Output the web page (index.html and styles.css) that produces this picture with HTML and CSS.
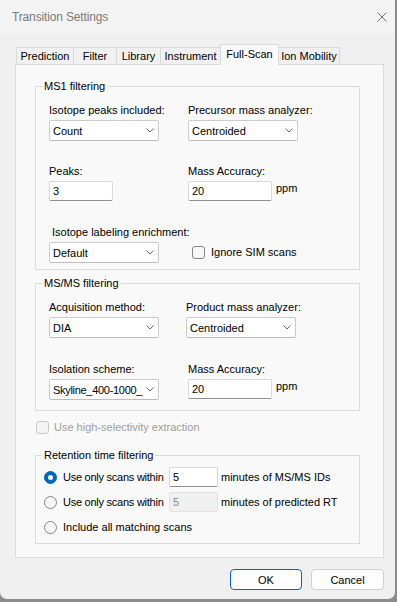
FILE: index.html
```html
<!DOCTYPE html>
<html lang="en">
<head>
  <meta charset="UTF-8" />
  <title>Transition Settings</title>
  <link rel="stylesheet" href="styles.css">
</head>
<body>
  <div class="window">
    <div class="titlebar">
      <span class="title">Transition Settings</span>
      <svg class="close-icon" width="10" height="10" viewBox="0 0 10 10">
        <path d="M0.5 0.5 L9.5 9.5 M9.5 0.5 L0.5 9.5" />
      </svg>
    </div>

    <div class="dialog">
      <div class="tabs">
        <div class="tab tab-prediction">Prediction</div>
        <div class="tab tab-filter">Filter</div>
        <div class="tab tab-library">Library</div>
        <div class="tab tab-instrument">Instrument</div>
        <div class="tab tab-fullscan active">Full-Scan</div>
        <div class="tab tab-ionmobility">Ion Mobility</div>
      </div>

      <div class="panel">
        <fieldset class="group group-ms1">
          <legend>MS1 filtering</legend>
          <div class="group-body">
            <div class="field">
              <label>Isotope peaks included:</label>
              <div class="combo">
                <span class="combo-text">Count</span>
                <svg class="chevron" width="8" height="5" viewBox="0 0 8 5"><polyline points="0.5,0.5 4,4 7.5,0.5" /></svg>
              </div>
            </div>
            <div class="field">
              <label>Precursor mass analyzer:</label>
              <div class="combo">
                <span class="combo-text">Centroided</span>
                <svg class="chevron" width="8" height="5" viewBox="0 0 8 5"><polyline points="0.5,0.5 4,4 7.5,0.5" /></svg>
              </div>
            </div>
            <div class="field">
              <label>Peaks:</label>
              <input class="textbox textbox-peaks" type="text" value="3">
            </div>
            <div class="field">
              <label>Mass Accuracy:</label>
              <div class="unit-row">
                <input class="textbox" type="text" value="20">
                <span class="unit">ppm</span>
              </div>
            </div>
            <div class="field">
              <label class="label-indent">Isotope labeling enrichment:</label>
              <div class="combo">
                <span class="combo-text">Default</span>
                <svg class="chevron" width="8" height="5" viewBox="0 0 8 5"><polyline points="0.5,0.5 4,4 7.5,0.5" /></svg>
              </div>
            </div>
            <div class="field field-check">
              <div class="check-row check-sim">
                <span class="checkbox"></span>
                <span>Ignore SIM scans</span>
              </div>
            </div>
          </div>
        </fieldset>

        <fieldset class="group group-ms2">
          <legend>MS/MS filtering</legend>
          <div class="group-body">
            <div class="field">
              <label>Acquisition method:</label>
              <div class="combo">
                <span class="combo-text">DIA</span>
                <svg class="chevron" width="8" height="5" viewBox="0 0 8 5"><polyline points="0.5,0.5 4,4 7.5,0.5" /></svg>
              </div>
            </div>
            <div class="field">
              <label>Product mass analyzer:</label>
              <div class="combo">
                <span class="combo-text">Centroided</span>
                <svg class="chevron" width="8" height="5" viewBox="0 0 8 5"><polyline points="0.5,0.5 4,4 7.5,0.5" /></svg>
              </div>
            </div>
            <div class="field">
              <label>Isolation scheme:</label>
              <div class="combo">
                <span class="combo-text combo-text-long">Skyline_400-1000_</span>
                <svg class="chevron" width="8" height="5" viewBox="0 0 8 5"><polyline points="0.5,0.5 4,4 7.5,0.5" /></svg>
              </div>
            </div>
            <div class="field field-shift">
              <label>Mass Accuracy:</label>
              <div class="unit-row">
                <input class="textbox" type="text" value="20">
                <span class="unit">ppm</span>
              </div>
            </div>
          </div>
        </fieldset>

        <div class="check-row check-hse disabled">
          <span class="checkbox"></span>
          <span>Use high-selectivity extraction</span>
        </div>

        <fieldset class="group group-rt">
          <legend>Retention time filtering</legend>
          <div class="group-body">
            <div class="radio-row">
              <span class="radio checked"></span>
              <span class="radio-label">Use only scans within</span>
              <input class="textbox textbox-minutes" type="text" value="5">
              <span>minutes of MS/MS IDs</span>
            </div>
            <div class="radio-row">
              <span class="radio"></span>
              <span class="radio-label">Use only scans within</span>
              <input class="textbox textbox-minutes" type="text" value="5" disabled>
              <span>minutes of predicted RT</span>
            </div>
            <div class="radio-row">
              <span class="radio"></span>
              <span>Include all matching scans</span>
            </div>
          </div>
        </fieldset>
      </div>

      <div class="buttons">
        <button class="btn btn-primary">OK</button>
        <button class="btn btn-cancel">Cancel</button>
      </div>
    </div>
  </div>
</body>
</html>
```

FILE: styles.css
```css
* {
  box-sizing: border-box;
}

body {
  margin: 0;
  background: #8c8c8c;
  font-family: 'Liberation Sans', Arial, sans-serif;
  font-size: 11px;
  color: #000;
}

.window {
  width: 395px;
  height: 599px;
  background: #f0f0f0;
  border-radius: 0 0 7px 7px;
  overflow: hidden;
}

/* title bar */
.titlebar {
  height: 34px;
  display: flex;
  align-items: center;
  justify-content: space-between;
  padding: 0 8px 1px 12px;
  background: #f3f3f3;
}

.title {
  font-size: 12px;
  color: #7a7a7a;
  letter-spacing: -0.15px;
}

.close-icon path {
  stroke: #6e6e6e;
  stroke-width: 1;
  fill: none;
}

.dialog {
  padding: 10px 11px 0 15px;
}

/* tabs */
.tabs {
  display: flex;
  align-items: flex-end;
  height: 20px;
  padding-left: 1px;
}

.tab {
  height: 17px;
  margin-left: -1px;
  border: 1px solid #d9d9d9;
  border-bottom: 0;
  background: #f0f0f0;
  display: flex;
  align-items: center;
  justify-content: center;
  line-height: 14px;
  white-space: nowrap;
}

.tab:first-child {
  margin-left: 0;
}

.tab.active {
  height: 21px;
  margin-bottom: -1px;
  padding-bottom: 2px;
  background: #f9f9f9;
  position: relative;
  z-index: 1;
}

.tab-prediction { width: 58px; }
.tab-filter { width: 44px; }
.tab-library { width: 45px; }
.tab-instrument { width: 61px; }
.tab-fullscan { width: 59px; }
.tab-ionmobility { width: 62px; }

.panel {
  width: 369px;
  height: 494px;
  border: 1px solid #dcdcdc;
  background: #f9f9f9;
  padding: 14px 23px 0 19px;
}

/* group boxes */
.group {
  margin: 0;
  padding: 0;
  min-width: 0;
  border: 1px solid #dcdcdc;
}

.group legend {
  margin-left: 6px;
  padding: 0 2px;
  line-height: 14px;
}

.group-body {
  display: grid;
  grid-template-columns: 139px 1fr;
  grid-auto-rows: 38px;
  row-gap: 23px;
  padding: 10px 0 6px 13px;
}

.group-ms2 {
  margin-top: 6px;
}

.group-ms2 .group-body {
  grid-template-columns: 137px 1fr;
  row-gap: 24px;
  padding-bottom: 10px;
}

.field {
  display: flex;
  flex-direction: column;
  gap: 3px;
}

.field label {
  display: block;
  line-height: 14px;
  white-space: nowrap;
}

.label-indent {
  padding-left: 3px;
}

.field-shift {
  margin-left: 2px;
}

.field-check {
  justify-content: flex-end;
  padding-bottom: 4px;
}

/* combo box */
.combo {
  display: flex;
  align-items: center;
  width: 110px;
  height: 21px;
  border: 1px solid #cccccc;
  border-bottom-color: #bcbcbc;
  border-radius: 2px;
  background: #fff;
  padding: 0 4px 0 3px;
}

.combo-text {
  flex: 1;
  min-width: 0;
  overflow: hidden;
  white-space: nowrap;
}

.combo-text-long {
  letter-spacing: -0.3px;
}

.chevron {
  flex-shrink: 0;
  margin-left: 1px;
}

.chevron polyline {
  fill: none;
  stroke: #6a6a6a;
  stroke-width: 1;
}

/* text boxes */
.textbox {
  width: 84px;
  height: 20px;
  margin: 0;
  padding: 0 3px;
  border: 1px solid #d9d9d9;
  border-bottom-color: #8f8f8f;
  border-radius: 2px;
  background: #fff;
  font: inherit;
  color: #000;
  outline: none;
}

.textbox-peaks {
  width: 64px;
}

.textbox-minutes {
  width: 49px;
  margin: 0 3px 0 0;
}

.textbox:disabled {
  background: #f0f0f0;
  border-color: #e2e2e2;
  color: #8a8a8a;
}

.unit-row {
  display: flex;
  align-items: flex-start;
  gap: 4px;
}

.unit {
  line-height: 14px;
}

/* check boxes and radios */
.check-row {
  display: flex;
  align-items: center;
  gap: 6px;
  line-height: 14px;
}

.check-sim {
  margin-left: 4px;
}

.check-hse {
  margin: 9px 0 14px 1px;
  gap: 5px;
}

.checkbox {
  width: 13px;
  height: 13px;
  border: 1px solid #858585;
  border-radius: 3px;
  background: #f7f7f7;
  flex-shrink: 0;
}

.disabled {
  color: #9d9d9d;
}

.disabled .checkbox {
  border-color: #c8c8c8;
  background: #f4f4f4;
}

.group-rt .group-body {
  display: flex;
  flex-direction: column;
  gap: 5px;
  padding: 5px 0 6px 8px;
}

.radio-row {
  display: flex;
  align-items: center;
  height: 20px;
}

.radio-label {
  width: 106px;
  white-space: nowrap;
  letter-spacing: -0.25px;
}

.radio {
  width: 13px;
  height: 13px;
  margin-right: 6px;
  border: 1px solid #858585;
  border-radius: 50%;
  background: #f7f7f7;
  flex-shrink: 0;
  display: flex;
  align-items: center;
  justify-content: center;
}

.radio.checked {
  border-color: #0067c0;
  background: #0067c0;
}

.radio.checked::after {
  content: '';
  width: 5px;
  height: 5px;
  border-radius: 50%;
  background: #fff;
}

/* buttons */
.buttons {
  display: flex;
  justify-content: flex-end;
  gap: 9px;
  margin-top: 11px;
}

.btn {
  width: 72px;
  height: 21px;
  padding: 0;
  border: 1px solid #d0d0d0;
  border-radius: 4px;
  background: #fdfdfd;
  font: inherit;
  color: #000;
}

.btn-primary {
  border-color: #0067c0;
}

.btn-cancel {
  width: 73px;
}
```
